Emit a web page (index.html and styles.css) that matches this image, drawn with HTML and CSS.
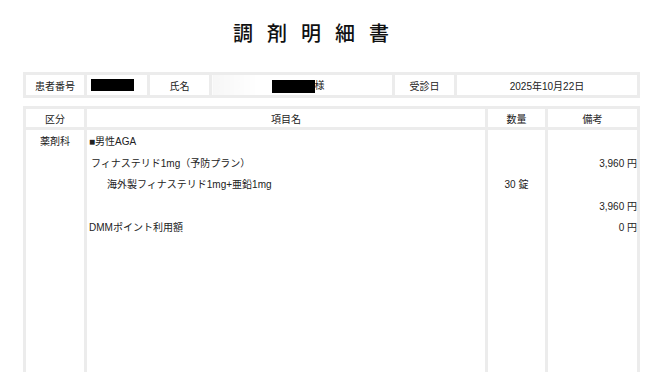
FILE: index.html
```html
<!DOCTYPE html>
<html lang="ja">
<head>
<meta charset="utf-8">
<link rel="stylesheet" href="styles.css">
</head>
<body>
<div class="page">
  <h1 class="title">調剤明細書</h1>
  <table class="info">
    <colgroup>
      <col class="c61"><col class="c63"><col class="c62"><col class="c183"><col class="c62"><col class="c183">
    </colgroup>
    <tr>
      <td>患者番号</td>
      <td class="left"><span class="redact r1"></span></td>
      <td>氏名</td>
      <td class="name"><span class="redact r2"></span>様</td>
      <td>受診日</td>
      <td>2025年10月22日</td>
    </tr>
  </table>
  <table class="items">
    <colgroup>
      <col class="c61"><col class="c401"><col class="c60"><col class="c92">
    </colgroup>
    <thead>
      <tr><th>区分</th><th>項目名</th><th>数量</th><th>備考</th></tr>
    </thead>
    <tbody>
      <tr><td class="cat">薬剤科</td><td class="item">■男性AGA</td><td></td><td></td></tr>
      <tr><td></td><td class="item i1">フィナステリド1mg（予防プラン）</td><td></td><td class="num">3,960 円</td></tr>
      <tr><td></td><td class="item i2">海外製フィナステリド1mg+亜鉛1mg</td><td class="qty">30 錠</td><td></td></tr>
      <tr><td></td><td></td><td></td><td class="num">3,960 円</td></tr>
      <tr><td></td><td class="item">DMMポイント利用額</td><td></td><td class="num">0 円</td></tr>
      <tr class="filler"><td></td><td></td><td></td><td></td></tr>
    </tbody>
  </table>
</div>
</body>
</html>
```

FILE: styles.css
```css
html, body {
  margin: 0;
  padding: 0;
  background: #fff;
  overflow: hidden;
}
.page {
  width: 662px;
  height: 372px;
  overflow: hidden;
  font-family: "Liberation Sans", "Noto Sans CJK JP", sans-serif;
  color: #222;
  font-size: 10px;
}
.title {
  margin: 0;
  padding-top: 19px;
  height: 72px;
  box-sizing: border-box;
  text-align: center;
  font-family: "Noto Sans CJK JP", sans-serif;
  font-weight: 500;
  font-size: 20px;
  line-height: 28px;
  letter-spacing: 14px;
  text-indent: -26px;
  color: #111;
}
table {
  border-collapse: collapse;
  table-layout: fixed;
  margin-left: 23px;
  width: 616px;
}
td, th {
  border: 3px solid #ececec;
  padding: 0;
  text-align: center;
  font-weight: normal;
  white-space: nowrap;
  overflow: hidden;
}
.c61 { width: 61px; }
.c63 { width: 63px; }
.c62 { width: 62px; }
.c183 { width: 183px; }
.c401 { width: 401px; }
.c60 { width: 60px; }
.c92 { width: 92px; }
.info td {
  height: 20px;
}
.info .left {
  text-align: left;
  padding-left: 4px;
}
.redact {
  display: inline-block;
  background: #000;
  vertical-align: middle;
}
.r1 { width: 43px; height: 12px; }
.r2 { width: 43px; height: 13px; }
.name {
  padding-right: 8px;
  background: linear-gradient(90deg, #f6f6f6 0%, #fff 25%);
}
.items {
  margin-top: 8px;
}
.items th {
  height: 18px;
}
.items tbody td {
  border-top: 0;
  border-bottom: 0;
  height: 21.5px;
  vertical-align: middle;
}
.items .cat {
  text-align: center;
}
.items .item {
  text-align: left;
  padding-left: 2px;
}
.items .i1 { padding-left: 4px; }
.items .i2 { padding-left: 20px; }
.items .num {
  text-align: right;
  padding-right: 0;
}
.items .qty {
  text-align: center;
}
.items .filler td {
  height: 200px;
}
```
